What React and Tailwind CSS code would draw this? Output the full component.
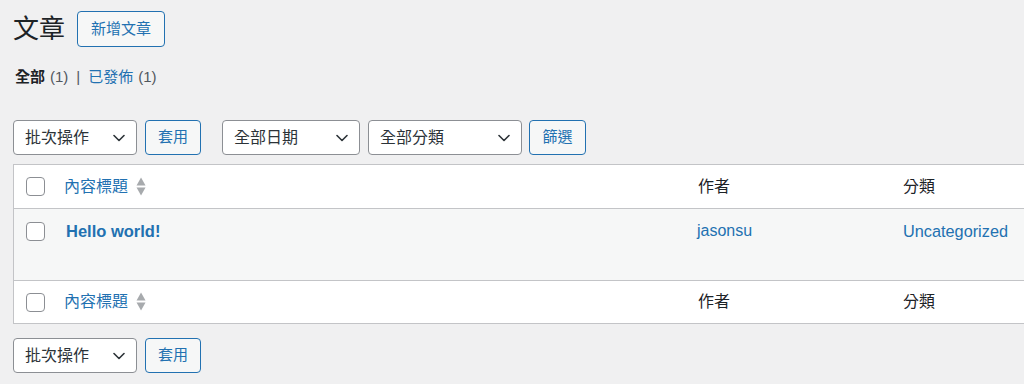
import React from "react";

const FONT = { fontFamily: '"Liberation Sans", "Noto Sans CJK TC", sans-serif' };

function Chevron() {
  return (
    <svg width="12" height="8" viewBox="0 0 12 8" fill="none">
      <path d="M1 1.5l5 5 5-5" stroke="#2c3338" strokeWidth="1.6" strokeLinecap="round" strokeLinejoin="round" />
    </svg>
  );
}

function Select({ label, w }) {
  return (
    <div className={`${w} h-[35px] flex items-center justify-between pl-[11px] pr-[11px] bg-white border border-[#8c8f94] rounded-[4px] text-[16px] text-[#2c3338]`}>
      <span>{label}</span>
      <Chevron />
    </div>
  );
}

function Btn({ label, w }) {
  return (
    <div className={`${w} h-[35px] flex items-center justify-center bg-[#f6f7f7] border border-[#2271b1] rounded-[4px] text-[15px] text-[#2271b1]`}>
      {label}
    </div>
  );
}

function Checkbox() {
  return <div className="w-[19px] h-[19px] border border-[#8c8f94] rounded-[4px] bg-white shrink-0" />;
}

function Sort() {
  return (
    <svg width="10" height="20" viewBox="0 0 10 20" className="ml-[8px]">
      <path d="M5 0.5L9.5 8.5H0.5Z" fill="#a7aaad" />
      <path d="M0.5 10.5H9.5L5 18.5Z" fill="#a7aaad" />
    </svg>
  );
}

function HeadRow({ h, border }) {
  return (
    <div className={`flex items-center ${h} ${border}`}>
      <div className="w-[42px] pl-[12px] flex items-center shrink-0">
        <Checkbox />
      </div>
      <div className="w-[634px] pl-[8px] flex items-center shrink-0 text-[16px] text-[#2271b1]">
        內容標題
        <Sort />
      </div>
      <div className="w-[205px] pl-[8px] shrink-0 text-[16px] text-[#1d2327]">作者</div>
      <div className="pl-[8px] shrink-0 text-[16px] text-[#1d2327]">分類</div>
    </div>
  );
}

export default function App() {
  return (
    <div className="w-[1024px] h-[384px] overflow-hidden bg-[#f0f0f1] text-[#1d2327]" style={FONT}>
      <div className="pl-[13px]">
        <div className="flex items-center gap-[12px] pt-[11px]">
          <h1 className="text-[26px] leading-[36px] font-normal">文章</h1>
          <div className="h-[36px] w-[88px] flex items-center justify-center bg-[#f6f7f7] border border-[#2271b1] rounded-[4px] text-[15px] text-[#2271b1]">
            新增文章
          </div>
        </div>

        <div className="mt-[20px] h-[20px] leading-[20px] flex items-center text-[15px] pl-[2px]">
          <span className="font-bold text-[#1d2327]">全部</span>
          <span className="ml-[5px] text-[#50575e]">(1)</span>
          <span className="mx-[8px] text-[#50575e]">|</span>
          <span className="text-[#2271b1]">已發佈</span>
          <span className="ml-[5px] text-[#50575e]">(1)</span>
        </div>

        <div className="mt-[33px] flex items-center">
          <Select label="批次操作" w="w-[124px]" />
          <div className="ml-[8px]"><Btn label="套用" w="w-[56px]" /></div>
          <div className="ml-[21px]"><Select label="全部日期" w="w-[138px]" /></div>
          <div className="ml-[8px]"><Select label="全部分類" w="w-[154px]" /></div>
          <div className="ml-[7px]"><Btn label="篩選" w="w-[57px]" /></div>
        </div>

        <div className="mt-[9px] w-[1060px] bg-white border border-[#c3c4c7]">
          <HeadRow h="h-[44px]" border="border-b border-[#c3c4c7]" />
          <div className="flex items-start h-[71px] bg-[#f6f7f7] pt-[12px]">
            <div className="w-[42px] pl-[12px] pt-[1px] flex shrink-0">
              <Checkbox />
            </div>
            <div className="w-[634px] pl-[10px] shrink-0 text-[16.5px] leading-[20px] font-bold text-[#2271b1]">
              Hello world!
            </div>
            <div className="w-[205px] pl-[7px] shrink-0 text-[16px] leading-[20px] text-[#2271b1]">jasonsu</div>
            <div className="pl-[8px] shrink-0 text-[16.3px] leading-[20px] text-[#2271b1]">Uncategorized</div>
          </div>
          <HeadRow h="h-[43px]" border="border-t border-[#c3c4c7]" />
        </div>

        <div className="mt-[14px] flex items-center">
          <Select label="批次操作" w="w-[124px]" />
          <div className="ml-[8px]"><Btn label="套用" w="w-[56px]" /></div>
        </div>
      </div>
    </div>
  );
}
